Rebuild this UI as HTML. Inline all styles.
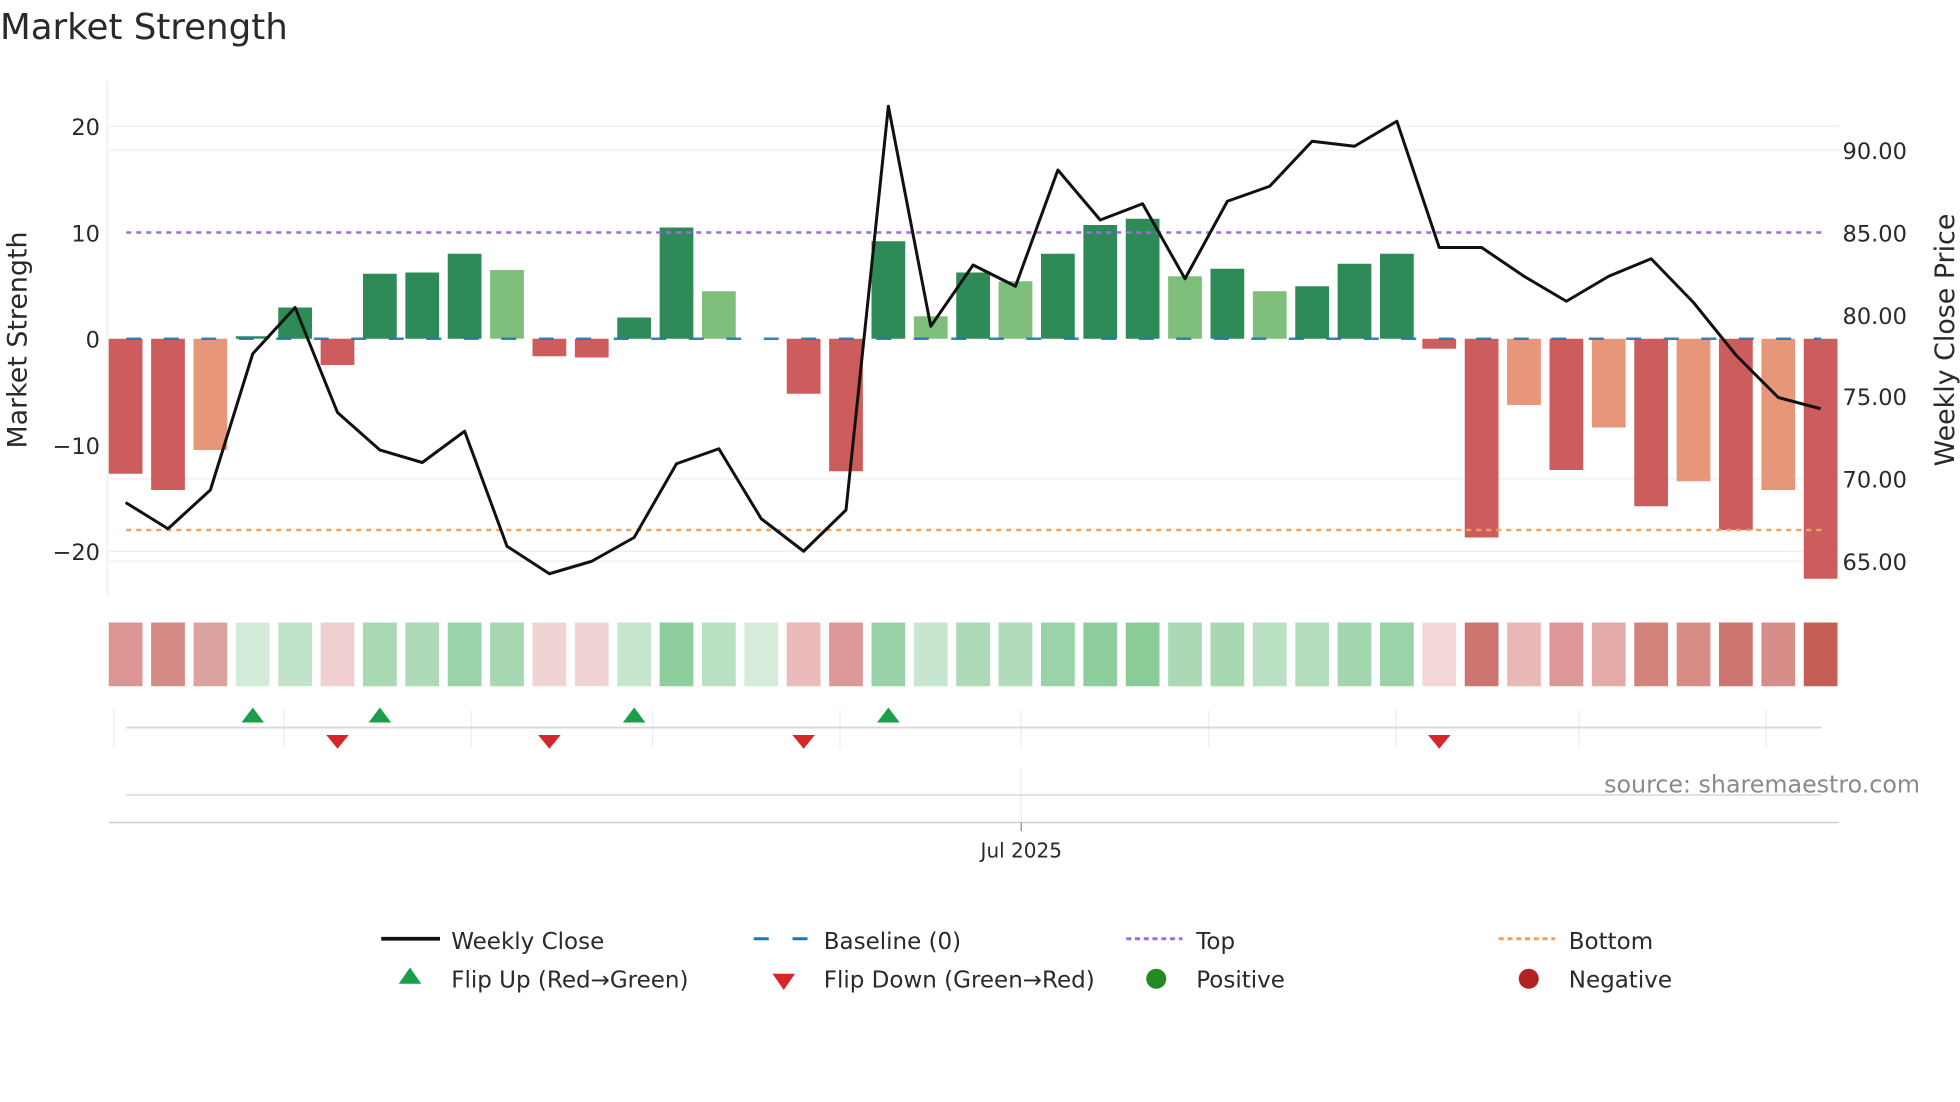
<!DOCTYPE html>
<html><head><meta charset="utf-8"><style>
html,body{margin:0;padding:0;background:#fff;width:1960px;height:1102px;overflow:hidden}
svg{display:block}
text{font-family:"DejaVu Sans","Liberation Sans",sans-serif;fill:#2a2a2a}
</style></head><body>
<svg width="1960" height="1102" viewBox="0 0 1568 881.6" xmlns="http://www.w3.org/2000/svg">
<text x="0" y="31" font-size="28.5">Market Strength</text>
<g stroke="#eef0f4" stroke-width="1.2">
<line x1="87" y1="101" x2="1471" y2="101"/>
<line x1="87" y1="441" x2="1471" y2="441"/>
<line x1="87" y1="120" x2="1471" y2="120"/>
<line x1="87" y1="383" x2="1471" y2="383"/>
<line x1="87" y1="449" x2="1471" y2="449"/>
<line x1="86" y1="65" x2="86" y2="478"/>
</g>
<g font-size="18" text-anchor="end">
<text x="80" y="108">20</text><text x="80" y="193">10</text><text x="80" y="278">0</text><text x="80" y="363">−10</text><text x="80" y="448">−20</text>
</g>
<g font-size="18">
<text x="1474" y="127">90.00</text><text x="1474" y="193">85.00</text><text x="1474" y="259">80.00</text><text x="1474" y="324">75.00</text><text x="1474" y="390">70.00</text><text x="1474" y="456">65.00</text>
</g>
<text transform="translate(21,272) rotate(-90)" font-size="21.5" text-anchor="middle">Market Strength</text>
<text transform="translate(1563,272) rotate(-90)" font-size="21.5" text-anchor="middle">Weekly Close Price</text>
<g>
<rect x="87" y="271" width="27" height="108" fill="#cd5c5c"/>
<rect x="120.9" y="271" width="27" height="121" fill="#cd5c5c"/>
<rect x="154.8" y="271" width="27" height="89" fill="#e8967a"/>
<rect x="188.7" y="269" width="27" height="2" fill="#2e8b57"/>
<rect x="222.6" y="246" width="27" height="25" fill="#2e8b57"/>
<rect x="256.5" y="271" width="27" height="21" fill="#cd5c5c"/>
<rect x="290.4" y="219" width="27" height="52" fill="#2e8b57"/>
<rect x="324.3" y="218" width="27" height="53" fill="#2e8b57"/>
<rect x="358.2" y="203" width="27" height="68" fill="#2e8b57"/>
<rect x="392.1" y="216" width="27" height="55" fill="#7fbf7b"/>
<rect x="426" y="271" width="27" height="14" fill="#cd5c5c"/>
<rect x="459.9" y="271" width="27" height="15" fill="#cd5c5c"/>
<rect x="493.8" y="254" width="27" height="17" fill="#2e8b57"/>
<rect x="527.7" y="182" width="27" height="89" fill="#2e8b57"/>
<rect x="561.6" y="233" width="27" height="38" fill="#7fbf7b"/>
<rect x="629.4" y="271" width="27" height="44" fill="#cd5c5c"/>
<rect x="663.3" y="271" width="27" height="106" fill="#cd5c5c"/>
<rect x="697.2" y="193" width="27" height="78" fill="#2e8b57"/>
<rect x="731.1" y="253" width="27" height="18" fill="#7fbf7b"/>
<rect x="765" y="218" width="27" height="53" fill="#2e8b57"/>
<rect x="798.9" y="225" width="27" height="46" fill="#7fbf7b"/>
<rect x="832.8" y="203" width="27" height="68" fill="#2e8b57"/>
<rect x="866.7" y="180" width="27" height="91" fill="#2e8b57"/>
<rect x="900.6" y="175" width="27" height="96" fill="#2e8b57"/>
<rect x="934.5" y="221" width="27" height="50" fill="#7fbf7b"/>
<rect x="968.4" y="215" width="27" height="56" fill="#2e8b57"/>
<rect x="1002.3" y="233" width="27" height="38" fill="#7fbf7b"/>
<rect x="1036.2" y="229" width="27" height="42" fill="#2e8b57"/>
<rect x="1070.1" y="211" width="27" height="60" fill="#2e8b57"/>
<rect x="1104" y="203" width="27" height="68" fill="#2e8b57"/>
<rect x="1137.9" y="271" width="27" height="8" fill="#cd5c5c"/>
<rect x="1171.8" y="271" width="27" height="159" fill="#cd5c5c"/>
<rect x="1205.7" y="271" width="27" height="53" fill="#e8967a"/>
<rect x="1239.6" y="271" width="27" height="105" fill="#cd5c5c"/>
<rect x="1273.5" y="271" width="27" height="71" fill="#e8967a"/>
<rect x="1307.4" y="271" width="27" height="134" fill="#cd5c5c"/>
<rect x="1341.3" y="271" width="27" height="114" fill="#e8967a"/>
<rect x="1375.2" y="271" width="27" height="153" fill="#cd5c5c"/>
<rect x="1409.1" y="271" width="27" height="121" fill="#e8967a"/>
<rect x="1443" y="271" width="27" height="192" fill="#cd5c5c"/>
</g>
<line x1="101" y1="271" x2="1457" y2="271" stroke="#1f77b4" stroke-width="2" stroke-dasharray="12,18" opacity="0.9"/>
<line x1="101" y1="186" x2="1457" y2="186" stroke="#9b6ddf" stroke-width="2" stroke-dasharray="4,4"/>
<line x1="101" y1="424" x2="1457" y2="424" stroke="#f0a060" stroke-width="2" stroke-dasharray="4,4"/>
<polyline fill="none" stroke="#111" stroke-width="2.4" stroke-linejoin="round" points="100.5,402 134.4,423 168.3,392 202.2,283 236.1,246 270,330 303.9,360 337.8,370 371.7,345 405.6,437 439.5,459 473.4,449 507.3,430 541.2,371 575.1,359 609,415 642.9,441 676.8,408 710.7,85 744.6,261 778.5,212 812.4,229 846.3,136 880.2,176 914.1,163 948,223 981.9,161 1015.8,149 1049.7,113 1083.6,117 1117.5,97 1151.4,198 1185.3,198 1219.2,221 1253.1,241 1287,221 1320.9,207 1354.8,242 1388.7,284 1422.6,318 1456.5,327"/>
<g>
<rect x="87" y="498" width="27" height="51" fill="#db9593"/>
<rect x="120.9" y="498" width="27" height="51" fill="#d48a85"/>
<rect x="154.8" y="498" width="27" height="51" fill="#dea29e"/>
<rect x="188.7" y="498" width="27" height="51" fill="#d3ebd9"/>
<rect x="222.6" y="498" width="27" height="51" fill="#c1e3ca"/>
<rect x="256.5" y="498" width="27" height="51" fill="#efcfcf"/>
<rect x="290.4" y="498" width="27" height="51" fill="#a9d9b3"/>
<rect x="324.3" y="498" width="27" height="51" fill="#acdab6"/>
<rect x="358.2" y="498" width="27" height="51" fill="#9bd3a8"/>
<rect x="392.1" y="498" width="27" height="51" fill="#a8d8b2"/>
<rect x="426" y="498" width="27" height="51" fill="#f0d4d3"/>
<rect x="459.9" y="498" width="27" height="51" fill="#f0d4d3"/>
<rect x="493.8" y="498" width="27" height="51" fill="#c6e5cd"/>
<rect x="527.7" y="498" width="27" height="51" fill="#8ecd9c"/>
<rect x="561.6" y="498" width="27" height="51" fill="#b9e0c3"/>
<rect x="595.5" y="498" width="27" height="51" fill="#d5ecdb"/>
<rect x="629.4" y="498" width="27" height="51" fill="#eababa"/>
<rect x="663.3" y="498" width="27" height="51" fill="#dc9896"/>
<rect x="697.2" y="498" width="27" height="51" fill="#99d2a6"/>
<rect x="731.1" y="498" width="27" height="51" fill="#c8e6cf"/>
<rect x="765" y="498" width="27" height="51" fill="#acdab6"/>
<rect x="798.9" y="498" width="27" height="51" fill="#b1dcba"/>
<rect x="832.8" y="498" width="27" height="51" fill="#9bd3a8"/>
<rect x="866.7" y="498" width="27" height="51" fill="#8ecd9c"/>
<rect x="900.6" y="498" width="27" height="51" fill="#8acb98"/>
<rect x="934.5" y="498" width="27" height="51" fill="#aad9b4"/>
<rect x="968.4" y="498" width="27" height="51" fill="#a8d8b2"/>
<rect x="1002.3" y="498" width="27" height="51" fill="#b9e0c3"/>
<rect x="1036.2" y="498" width="27" height="51" fill="#b3ddbd"/>
<rect x="1070.1" y="498" width="27" height="51" fill="#a3d6ae"/>
<rect x="1104" y="498" width="27" height="51" fill="#9bd3a8"/>
<rect x="1137.9" y="498" width="27" height="51" fill="#f2d8d7"/>
<rect x="1171.8" y="498" width="27" height="51" fill="#cc7570"/>
<rect x="1205.7" y="498" width="27" height="51" fill="#e8b9b7"/>
<rect x="1239.6" y="498" width="27" height="51" fill="#dc9796"/>
<rect x="1273.5" y="498" width="27" height="51" fill="#e3aaa8"/>
<rect x="1307.4" y="498" width="27" height="51" fill="#d4827c"/>
<rect x="1341.3" y="498" width="27" height="51" fill="#d88c86"/>
<rect x="1375.2" y="498" width="27" height="51" fill="#cd7670"/>
<rect x="1409.1" y="498" width="27" height="51" fill="#d78e89"/>
<rect x="1443" y="498" width="27" height="51" fill="#c55f56"/>
</g>
<g stroke="#eceef2" stroke-width="1">
<line x1="91" y1="568" x2="91" y2="598"/><line x1="227" y1="568" x2="227" y2="598"/><line x1="377" y1="568" x2="377" y2="598"/><line x1="522" y1="568" x2="522" y2="598"/><line x1="672" y1="568" x2="672" y2="598"/><line x1="817" y1="568" x2="817" y2="598"/><line x1="967" y1="568" x2="967" y2="598"/><line x1="1117" y1="568" x2="1117" y2="598"/><line x1="1263" y1="568" x2="1263" y2="598"/><line x1="1413" y1="568" x2="1413" y2="598"/>
<line x1="817" y1="616" x2="817" y2="658"/>
</g>
<line x1="101" y1="582" x2="1457" y2="582" stroke="#d8d8d8" stroke-width="1.5"/>
<line x1="101" y1="636" x2="1457" y2="636" stroke="#d8d8d8" stroke-width="1.2"/>
<line x1="87" y1="658" x2="1471" y2="658" stroke="#cfcfcf" stroke-width="1.2"/>
<line x1="817" y1="658" x2="817" y2="665" stroke="#888" stroke-width="1"/>
<g fill="#1a9e4a">
<polygon points="202.2,566 193.2,578 211.2,578"/><polygon points="303.9,566 294.9,578 312.9,578"/><polygon points="507.3,566 498.3,578 516.3,578"/><polygon points="710.7,566 701.7,578 719.7,578"/>
</g>
<g fill="#d62728">
<polygon points="270,599 261,588 279,588"/><polygon points="439.5,599 430.5,588 448.5,588"/><polygon points="642.9,599 633.9,588 651.9,588"/><polygon points="1151.4,599 1142.4,588 1160.4,588"/>
</g>
<text x="817" y="686" font-size="16" text-anchor="middle">Jul 2025</text>
<text x="1536" y="634" font-size="19" text-anchor="end" style="fill:#8a8a8a">source: sharemaestro.com</text>
<g font-size="18.4">
<line x1="305" y1="751" x2="352" y2="751" stroke="#111" stroke-width="3"/><text x="361" y="759">Weekly Close</text>
<line x1="603" y1="751" x2="615" y2="751" stroke="#1f77b4" stroke-width="2.4"/><line x1="634" y1="751" x2="646" y2="751" stroke="#1f77b4" stroke-width="2.4"/><text x="659" y="759">Baseline (0)</text>
<line x1="901" y1="751" x2="946" y2="751" stroke="#9b6ddf" stroke-width="2.4" stroke-dasharray="4,3"/><text x="957" y="759">Top</text>
<line x1="1199" y1="751" x2="1244" y2="751" stroke="#f0a060" stroke-width="2.4" stroke-dasharray="4,3"/><text x="1255" y="759">Bottom</text>
<polygon points="328,774 319,787 337,787" fill="#1a9e4a"/><text x="361" y="790">Flip Up (Red→Green)</text>
<polygon points="627,792 618,779 636,779" fill="#d62728"/><text x="659" y="790">Flip Down (Green→Red)</text>
<circle cx="925" cy="783" r="8" fill="#228b22"/><text x="957" y="790">Positive</text>
<circle cx="1223" cy="783" r="8" fill="#b22222"/><text x="1255" y="790">Negative</text>
</g>
</svg>
</body></html>
